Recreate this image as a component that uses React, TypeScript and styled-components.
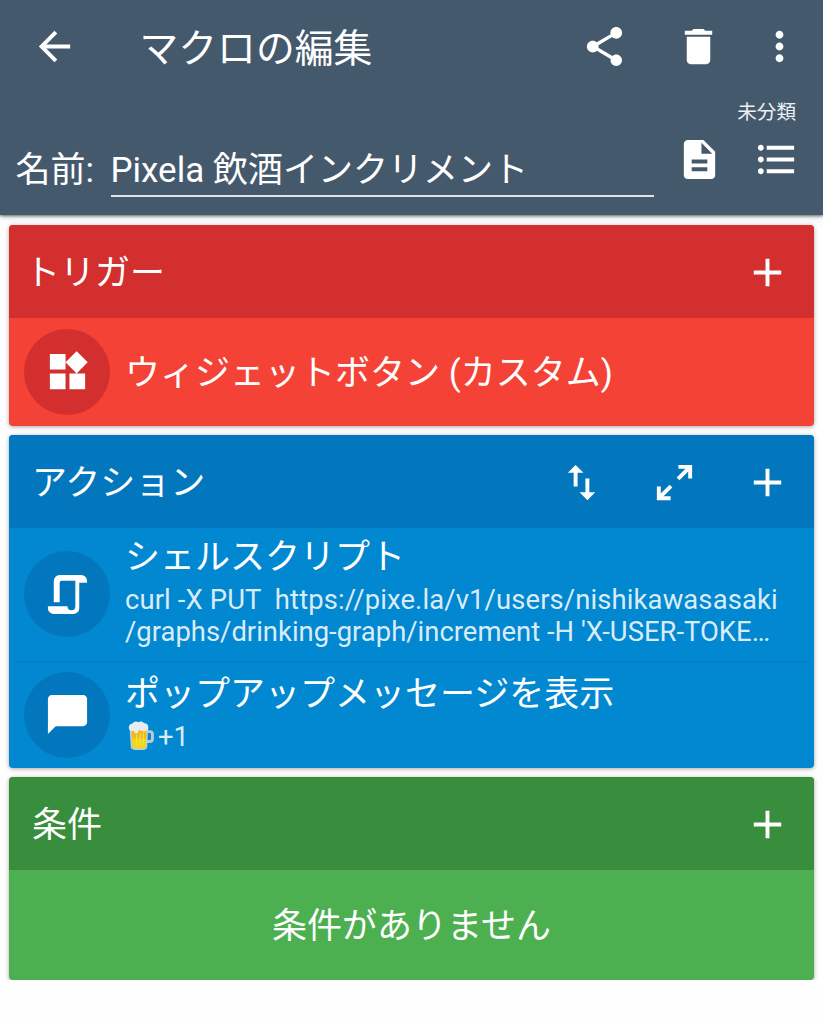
import React from 'react'
import styled, { createGlobalStyle } from 'styled-components'
import {
    MdAdd,
    MdArrowBack,
    MdChatBubble,
    MdDelete,
    MdDescription,
    MdFormatListBulleted,
    MdMoreVert,
    MdShare,
    MdSwapVert,
} from 'react-icons/md'

const ICON = 47

const palette = {
    header: '#45596d',
    red: { dark: '#d32f2f', main: '#f44336' },
    blue: { dark: '#0277bd', main: '#0288d1' },
    green: { dark: '#388e3c', main: '#4caf50' },
}

const WidgetsIcon = () => (
    <svg width={ICON} height={ICON} viewBox="0 0 24 24" fill="currentColor">
        <path d="M13 13v8h8v-8h-8zM3 21h8v-8H3v8zM3 3v8h8V3H3zm13.66-1.31L11 7.34 16.66 13l5.66-5.66-5.66-5.65z" />
    </svg>
)

const ScriptIcon = () => (
    <svg width={ICON} height={ICON} viewBox="0 0 24 24" fill="currentColor">
        <path d="M14 20a2 2 0 0 0 2-2V5H9a1 1 0 0 0-1 1v10H5V5a3 3 0 0 1 3-3h11a3 3 0 0 1 3 3v1h-4v13a3 3 0 0 1-3 3H5a3 3 0 0 1-3-3v-1h10a2 2 0 0 0 2 2z" />
    </svg>
)

const ExpandIcon = () => (
    <svg width={ICON} height={ICON} viewBox="0 0 24 24" fill="currentColor">
        <path d="M10 21v-2H6.41l4.5-4.5-1.41-1.41-4.5 4.5V14H3v7h7zm4.5-10.09 4.5-4.5V10h2V3h-7v2h3.59l-4.5 4.5 1.41 1.41z" />
    </svg>
)

const BeerIcon = () => (
    <Beer viewBox="0 0 28 32">
        <path d="M20 12h3.200a2.600 2.600 0 0 1 2.600 2.600v5a2.600 2.600 0 0 1-2.600 2.600H20" fill="none" stroke="#b9cbd6" strokeWidth="3" />
        <path d="M2.200 8h19.200l-1 20.200q-.2 2.200-3 2.400-5.600.6-11 0-2.700-.3-2.900-2.400z" fill="#c5ced0" />
        <path d="M4.200 10h15.600l-.8 17.200q-.1 1.500-2 1.700-5 .5-10 0-1.900-.2-2-1.700z" fill="#f3b81c" />
        <path d="M4.700 19h14.600l-.5 8q-.1 1.400-1.900 1.600-4.900.5-9.700 0-1.700-.2-1.800-1.600z" fill="#efda18" />
        <path d="M9.500 15.500V26M13.200 14v12M16.500 14v11" fill="none" stroke="#f9e04e" strokeWidth="1.1" strokeLinecap="round" />
        <path d="M1.800 9.500C.6 6.300 2.800 3.700 5.200 3.600 6.300 1.200 9.600.9 11 2.300c2.100-1.500 5.200-.9 6.100 1 3-.1 4.800 2.100 4.400 4.500.2 2.300-1.100 3.500-2.600 3.300-1.300 1.400-3 1-3.800-.1-1.400.4-2.300 0-3-.7-.7.7-1.100 3.700-2.900 3.700-1.900 0-1.600-2.400-2.700-3-1.800.7-4.100.3-4.700-1.500z" fill="#e6ecef" />
    </Beer>
)

type Colors = { dark: string; main: string }

type SectionProps = {
    title: string
    colors: Colors
    indent?: number
    tools?: React.ReactNode
    children: React.ReactNode
}

const Section = ({ title, colors, indent = 23, tools, children }: SectionProps) => (
    <Card $color={colors.main}>
        <CardHeader $color={colors.dark} $indent={indent}>
            <CardTitle>{title}</CardTitle>
            <Tools>
                {tools}
                <MdAdd size={ICON} />
            </Tools>
        </CardHeader>
        {children}
    </Card>
)

const App = () => (
    <>
        <GlobalStyle />
        <Header>
            <Toolbar>
                <MdArrowBack size={ICON} />
                <PageTitle>マクロの編集</PageTitle>
                <ToolbarActions>
                    <MdShare size={ICON} />
                    <MdDelete size={ICON} />
                    <Overflow>
                        <MdMoreVert size={ICON} />
                    </Overflow>
                </ToolbarActions>
            </Toolbar>
            <NameRow>
                <NameLabel>名前:</NameLabel>
                <NameField>Pixela 飲酒インクリメント</NameField>
                <NameSide>
                    <Category>未分類</Category>
                    <SideIcons>
                        <MdDescription size={ICON} />
                        <MdFormatListBulleted size={ICON} />
                    </SideIcons>
                </NameSide>
            </NameRow>
        </Header>

        <Sections>
            <Section title="トリガー" colors={palette.red} indent={16}>
                <Item $height={108}>
                    <Badge $color={palette.red.dark}><WidgetsIcon /></Badge>
                    <SingleTitle>ウィジェットボタン (カスタム)</SingleTitle>
                </Item>
            </Section>

            <Section
                title="アクション"
                colors={palette.blue}
                tools={<><MdSwapVert size={ICON} /><ExpandIcon /></>}
            >
                <Item $height={133}>
                    <Badge $color={palette.blue.dark}><ScriptIcon /></Badge>
                    <ItemBody>
                        <ItemTitle>シェルスクリプト</ItemTitle>
                        <Detail $spacing={0.13}>{'curl -X PUT  https://pixe.la/v1/users/nishikawasasaki'}</Detail>
                        <Detail $spacing={0.02}>{'/graphs/drinking-graph/increment -H \'X-USER-TOKE…'}</Detail>
                    </ItemBody>
                </Item>
                <Divider />
                <Item $height={106}>
                    <Badge $color={palette.blue.dark}><MdChatBubble size={ICON} /></Badge>
                    <ItemBody>
                        <ItemTitle>ポップアップメッセージを表示</ItemTitle>
                        <Detail><BeerIcon />+1</Detail>
                    </ItemBody>
                </Item>
            </Section>

            <Section title="条件" colors={palette.green}>
                <Empty>条件がありません</Empty>
            </Section>
        </Sections>
    </>
)

const GlobalStyle = createGlobalStyle`
    * {
        box-sizing: border-box;
    }
    body {
        margin: 0;
        background: #fefefe;
        color: #fff;
        font-family: Roboto, "Noto Sans CJK JP", sans-serif;
    }
    svg {
        display: block;
        flex-shrink: 0;
    }
`

/* HEADER */

const Header = styled.header`
    height: 215px;
    background: ${palette.header};
    box-shadow: 0 1px 3px rgba(0, 0, 0, 0.6), 0 3px 8px rgba(0, 0, 0, 0.1);
`

const Toolbar = styled.div`
    display: flex;
    align-items: center;
    height: 93px;
    padding: 0 20px 0 31px;
`

const PageTitle = styled.h1`
    margin: 0 0 0 61.5px;
    padding-top: 4px;
    font-size: 38.8px;
    font-weight: 400;
    line-height: 56px;
    white-space: nowrap;
`

const ToolbarActions = styled.div`
    display: flex;
    gap: 47px;
    margin-left: auto;
    padding-bottom: 1px;
`

const Overflow = styled.div`
    margin-left: -13px;
`

const NameRow = styled.div`
    display: flex;
    align-items: flex-start;
    padding: 0 23px 0 15.5px;
`

const NameLabel = styled.span`
    width: 95px;
    margin-top: 53px;
    font-size: 35px;
    line-height: 50px;
    white-space: nowrap;
`

const NameField = styled.div`
    width: 543px;
    height: 51px;
    margin-top: 53px;
    border-bottom: 2px solid #dfe3e6;
    font-size: 35px;
    line-height: 50px;
    white-space: nowrap;
`

const NameSide = styled.div`
    display: flex;
    flex-direction: column;
    align-items: flex-end;
    margin-left: auto;
    padding-top: 6px;
`

const Category = styled.span`
    margin-right: 4px;
    font-size: 19.6px;
    line-height: 28px;
    color: #eef0f2;
`

const SideIcons = styled.div`
    display: flex;
    gap: 30px;
    margin-top: 9px;
`

/* CARDS */

const Sections = styled.main`
    display: flex;
    flex-direction: column;
    gap: 9px;
    padding: 10px 9px 0;
`

const Card = styled.section<{ $color: string }>`
    overflow: hidden;
    border-radius: 4px;
    background: ${({ $color }) => $color};
    box-shadow: 0 1px 4px rgba(0, 0, 0, 0.35);
`

const CardHeader = styled.div<{ $color: string; $indent: number }>`
    display: flex;
    align-items: center;
    height: 93px;
    padding: 1px 23px 0 ${({ $indent }) => $indent}px;
    background: ${({ $color }) => $color};
`

const CardTitle = styled.h2`
    margin: 0;
    padding-top: 4px;
    font-size: 35px;
    font-weight: 400;
    line-height: 50px;
`

const Tools = styled.div`
    display: flex;
    gap: 46px;
    margin-left: auto;
`

const Item = styled.div<{ $height: number }>`
    display: flex;
    align-items: center;
    height: ${({ $height }) => $height}px;
    padding: 0 15px 1px;
`

const Badge = styled.div<{ $color: string }>`
    display: flex;
    align-items: center;
    justify-content: center;
    flex-shrink: 0;
    width: 86px;
    height: 86px;
    margin-right: 15px;
    border-radius: 50%;
    background: ${({ $color }) => $color};
`

const ItemBody = styled.div`
    display: flex;
    flex-direction: column;
    padding-bottom: 5px;
`

const ItemTitle = styled.div`
    margin-bottom: 3px;
    font-size: 35px;
    line-height: 46px;
    white-space: nowrap;
`

const SingleTitle = styled(ItemTitle)`
    margin: 5px 0 0;
`

const Detail = styled.div<{ $spacing?: number }>`
    display: flex;
    align-items: center;
    font-size: 27.4px;
    line-height: 32px;
    letter-spacing: ${({ $spacing }) => $spacing || 0}px;
    white-space: pre;
    color: rgba(255, 255, 255, 0.87);
`

const Beer = styled.svg`
    width: 28px;
    height: 31px;
    margin: -2px 3px 0 2px;
`

const Divider = styled.div`
    height: 1px;
    margin: 0 4px;
    background: #027bc0;
`

const Empty = styled.div`
    display: flex;
    align-items: center;
    justify-content: center;
    height: 110px;
    padding-top: 4px;
    font-size: 35px;
    line-height: 50px;
`

export default App
